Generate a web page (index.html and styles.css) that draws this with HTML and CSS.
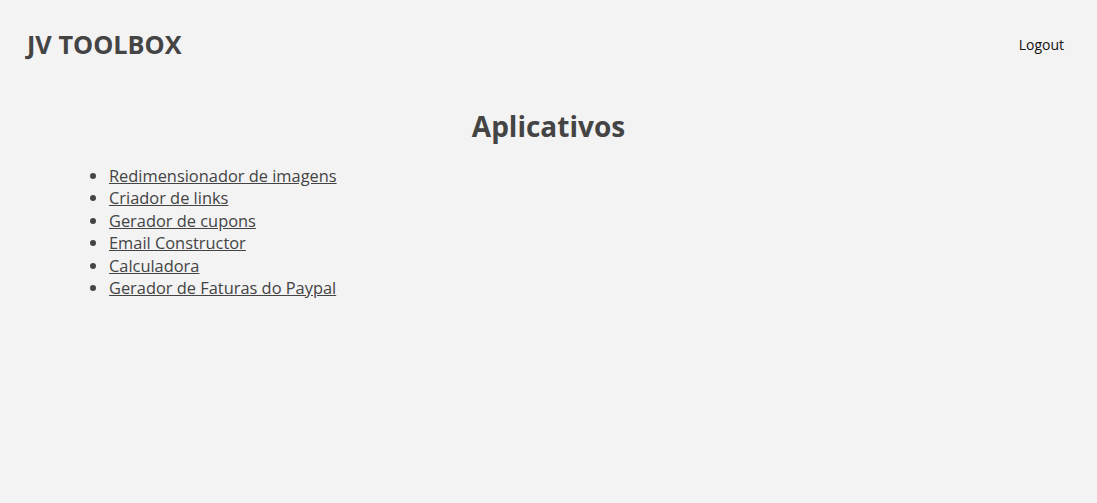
FILE: index.html
```html
<!DOCTYPE html>
<html lang="pt">
<head>
<meta charset="utf-8">
<title>JV Toolbox</title>
<link rel="stylesheet" href="styles.css">
</head>
<body>
<header class="topbar">
  <div class="brand">JV TOOLBOX</div>
  <a class="logout" href="#">Logout</a>
</header>
<main class="content">
  <h1 class="title">Aplicativos</h1>
  <ul class="apps">
    <li><a href="#">Redimensionador de imagens</a></li>
    <li><a href="#">Criador de links</a></li>
    <li><a href="#">Gerador de cupons</a></li>
    <li><a href="#">Email Constructor</a></li>
    <li><a href="#">Calculadora</a></li>
    <li><a href="#">Gerador de Faturas do Paypal</a></li>
  </ul>
</main>
</body>
</html>
```
FILE: styles.css
```css
html, body {
  margin: 0;
  padding: 0;
  background: #f3f3f3;
  font-family: "Open Sans", "Liberation Sans", sans-serif;
  color: #444;
}
.topbar {
  display: flex;
  justify-content: space-between;
  align-items: center;
  padding: 27px 33px 28px 27px;
}
.brand {
  font-size: 25.3px;
  font-weight: 700;
  color: #444;
}
.logout {
  font-size: 14px;
  color: #111;
  text-decoration: none;
}
.content {
  padding: 0 69px;
}
.title {
  text-align: center;
  font-size: 28px;
  font-weight: 700;
  margin: 18px 0 20px;
  color: #444;
}
.apps {
  margin: 0;
  padding-left: 40px;
  font-size: 16.4px;
  line-height: 22.4px;
}
.apps a {
  color: #444;
}
```
